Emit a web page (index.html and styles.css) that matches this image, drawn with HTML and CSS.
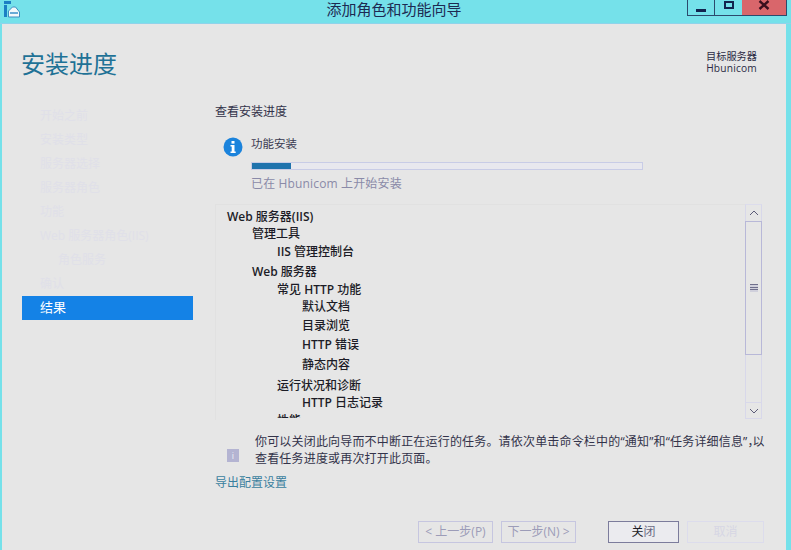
FILE: index.html
```html
<!DOCTYPE html>
<html lang="zh-CN">
<head>
<meta charset="utf-8">
<title>添加角色和功能向导</title>
<link rel="stylesheet" href="styles.css">
</head>
<body>
<div class="window">
  <header class="titlebar">
    <svg class="app-icon" width="16" height="17" viewBox="0 0 16 17">
      <rect x="0" y="0" width="7" height="3" fill="#1c7fc4"/>
      <rect x="0" y="4" width="3" height="12" fill="#1c7fc4"/>
      <path d="M4.500 10l4-4h3l4 5v5h-11z" fill="#f3f8fb" stroke="#3f8fc0"/>
      <rect x="6" y="11" width="8" height="2" fill="#6aaad6"/>
    </svg>
    <div class="title">添加角色和功能向导</div>
    <div class="controls">
      <div class="ctl ctl-min"><span class="min-glyph"></span></div>
      <div class="ctl ctl-max"><span class="max-glyph"></span></div>
      <div class="ctl ctl-close">
        <svg width="12" height="10" viewBox="0 0 12 10"><path d="M1.500 1l9 8M10.500 1l-9 8" stroke="#3a0f1e" stroke-width="2.400" fill="none"/></svg>
      </div>
    </div>
  </header>
  <div class="client">
    <div class="head">
      <h1 class="heading">安装进度</h1>
      <div class="target"><div>目标服务器</div><div class="target-name">Hbunicom</div></div>
    </div>
    <div class="columns">
      <nav class="nav">
        <div class="nav-item">开始之前</div>
        <div class="nav-item">安装类型</div>
        <div class="nav-item">服务器选择</div>
        <div class="nav-item">服务器角色</div>
        <div class="nav-item">功能</div>
        <div class="nav-item">Web 服务器角色(IIS)</div>
        <div class="nav-item nav-sub">角色服务</div>
        <div class="nav-item">确认</div>
        <div class="nav-item nav-active">结果</div>
      </nav>
      <main class="main">
        <div class="lead">查看安装进度</div>
        <div class="status">
          <svg class="info" width="20" height="20" viewBox="0 0 20 20">
            <circle cx="10" cy="10" r="9.500" fill="#1b83dc"/>
            <rect x="8.500" y="4" width="3" height="2.600" fill="#fff"/>
            <path d="M7.500 8h4v6.500h1.200V16H7.500v-1.500h1.200V9.500H7.500z" fill="#fff"/>
          </svg>
          <div class="status-body">
            <div class="status-title">功能安装</div>
            <div class="progress"><div class="progress-fill"></div></div>
            <div class="status-note">已在 Hbunicom 上开始安装</div>
          </div>
        </div>
        <div class="listbox">
          <div class="tree">
            <div class="row l0 r-a"><b class="lat">Web</b> 服务器<b class="lat">(IIS)</b></div>
            <div class="row l1 r-b">管理工具</div>
            <div class="row l2 r-c"><b class="lat">IIS</b> 管理控制台</div>
            <div class="row l1 r-d"><b class="lat">Web</b> 服务器</div>
            <div class="row l2 r-e">常见 <b class="lat">HTTP</b> 功能</div>
            <div class="row l3 r-f">默认文档</div>
            <div class="row l3 r-g">目录浏览</div>
            <div class="row l3 r-h"><b class="lat">HTTP</b> 错误</div>
            <div class="row l3 r-i">静态内容</div>
            <div class="row l2 r-j">运行状况和诊断</div>
            <div class="row l3 r-k"><b class="lat">HTTP</b> 日志记录</div>
            <div class="row l2 r-l">性能</div>
          </div>
          <div class="scrollbar">
            <div class="sb-btn">
              <svg width="10" height="6" viewBox="0 0 10 6"><path d="M1 5l4-4 4 4" fill="none" stroke="#5c5c78"/></svg>
            </div>
            <div class="sb-thumb"><span class="grip"></span></div>
            <div class="sb-track"></div>
            <div class="sb-btn sb-btn-down">
              <svg width="10" height="6" viewBox="0 0 10 6"><path d="M1 1l4 4 4-4" fill="none" stroke="#5c5c78"/></svg>
            </div>
          </div>
        </div>
        <div class="notice">
          <div class="notice-icon">i</div>
          <p class="notice-text">你可以关闭此向导而不中断正在运行的任务。请依次单击命令栏中的“通知”和“任务详细信息”<span class="tight">，</span>以<br>查看任务进度或再次打开此页面。</p>
        </div>
        <a class="export">导出配置设置</a>
      </main>
    </div>
    <footer class="footer">
      <div class="btn btn-faded">&lt; 上一步(P)</div>
      <div class="btn btn-faded btn-next">下一步(N) &gt;</div>
      <div class="btn btn-close"><span>关</span><span class="blot">闭</span></div>
      <div class="btn btn-cancel">取消</div>
    </footer>
  </div>
</div>
</body>
</html>
```

FILE: styles.css
```css
* { box-sizing: border-box; }
html, body { margin: 0; padding: 0; }
body {
  width: 791px;
  height: 550px;
  overflow: hidden;
  font-family: "Open Sans", "Noto Sans CJK SC", sans-serif;
  font-size: 12px;
  color: #2b2b3a;
}
.window {
  width: 791px;
  height: 550px;
  background: #75e1ea;
  display: flex;
  flex-direction: column;
}
.titlebar {
  height: 24px;
  flex: none;
  display: flex;
  position: relative;
  justify-content: center;
  border-bottom: 1px solid #8fd3ea;
}
.app-icon { position: absolute; left: 4px; top: 1px; }
.title {
  font-size: 15px;
  line-height: 18px;
  color: #1d2a52;
  margin-right: 3px;
}
.controls {
  position: absolute;
  left: 687px;
  top: 0;
  display: flex;
  height: 16px;
  border: 1px solid #2b4a6d;
  border-top: 0;
}
.ctl { display: flex; align-items: center; justify-content: center; }
.ctl-min { width: 27px; border-right: 1px solid #2b4a6d; }
.ctl-max { width: 27px; }
.ctl-close { width: 44px; background: #d9666b; }
.min-glyph { width: 10px; height: 3px; background: #12244f; margin-top: 5px; }
.max-glyph { width: 10px; height: 8px; border: 2px solid #12244f; margin-top: -5px; }
.ctl-close svg { margin-top: -5px; }

.client {
  flex: 1;
  margin: 0 5px 0 2px;
  background: #e6e6e6;
  display: flex;
  flex-direction: column;
}
.head {
  height: 72px;
  flex: none;
  display: flex;
  justify-content: space-between;
  padding: 22px 29px 0 20px;
}
.heading {
  margin: 0 0 0 -1px;
  font-size: 24px;
  line-height: 36px;
  font-weight: 400;
  color: #1f7296;
}
.target {
  font-size: 10.200px;
  line-height: 12px;
  color: #2b2b44;
  text-align: right;
  padding-top: 4px;
}
.target-name { letter-spacing: 0.200px; }
.columns { display: flex; height: 425px; flex: none; }
.nav {
  width: 171px;
  margin-left: 20px;
  padding-top: 8px;
  flex: none;
}
.nav-item {
  height: 24px;
  line-height: 23px;
  padding-left: 18px;
  color: #e0e0e9;
  font-size: 12px;
  white-space: nowrap;
}
.nav-sub { padding-left: 36px; }
.nav-active {
  background: #1482e6;
  color: #fff;
  font-size: 13px;
}
.main { margin-left: 22px; width: 551px; flex: none; }
.lead { line-height: 18px; font-size: 12px; margin-top: 7px; color: #33334a; }
.status { display: flex; margin-top: 15px; padding-left: 8px; }
.info { flex: none; margin-top: 1px; }
.status-body { margin-left: 8px; width: 392px; }
.status-title { line-height: 18px; color: #3a3a50; font-size: 11.500px; margin-top: -1px; }
.progress {
  height: 8px;
  margin-top: 9px;
  border: 1px solid #c8cce6;
  background: #e8e8ee;
}
.progress-fill { width: 39px; height: 6px; background: #1f73ad; }
.status-note {
  margin-top: 5px;
  line-height: 18px;
  color: #8a8aa8;
  font-size: 12px;
  letter-spacing: 0.150px;
}
.listbox {
  display: flex;
  justify-content: space-between;
  margin-top: 11px;
  height: 216px;
  border-top: 1px solid #e1e1e1;
  border-left: 1px solid #e1e1e1;
  width: 547px;
}
.tree {
  height: 213px;
  overflow: hidden;
  font-weight: 500;
  color: #1c1c26;
  font-size: 12px;
}
.lat { font-weight: 600; }
.row { height: 18px; line-height: 18px; white-space: nowrap; }
.l0 { padding-left: 11px; }
.l1 { padding-left: 36px; }
.l2 { padding-left: 61px; }
.l3 { padding-left: 86px; }
.r-a { margin-top: 3px; }
.r-b { margin-top: -1px; }
.r-d { margin-top: 2px; }
.r-f { margin-top: -1px; }
.r-g { margin-top: 1px; }
.r-h { margin-top: 1px; }
.r-i { margin-top: 2px; }
.r-j { margin-top: 3px; }
.r-k { margin-top: -1px; }
.scrollbar {
  width: 17px;
  height: 215px;
  margin-top: -1px;
  display: flex;
  flex-direction: column;
  border: 1px solid #d8d8ea;
  border-top-color: #dcdcec;
}
.sb-btn {
  height: 16px;
  flex: none;
  display: flex;
  align-items: center;
  justify-content: center;
}
.sb-thumb {
  height: 134px;
  flex: none;
  margin: 0 -1px;
  border: 1px solid #b8b8d8;
  display: flex;
  align-items: center;
  justify-content: center;
}
.grip {
  width: 8px;
  height: 8px;
  background: repeating-linear-gradient(#70708c 0 1px, #d0d0dc 1px 2.600px);
}
.sb-track { flex: 1; }
.sb-btn-down { border-top: 1px solid #d8d8ea; }
.notice { display: flex; position: relative; padding: 13px 0 0 40px; }
.notice-icon {
  position: absolute;
  left: 12px;
  top: 29px;
  width: 12px;
  height: 13px;
  background: #b4b4d2;
  color: #eeeef4;
  font-size: 9px;
  line-height: 13px;
  text-align: center;
}
.notice-text {
  margin: 0;
  font-size: 12px;
  line-height: 17px;
  color: #33334a;
  letter-spacing: 0.180px;
  white-space: nowrap;
}
.tight { letter-spacing: -7px; }
.export {
  display: block;
  margin-top: 8px;
  line-height: 16px;
  color: #3a7f9e;
  font-size: 12px;
}
.footer {
  height: 29px;
  flex: none;
  display: flex;
  align-items: flex-start;
  padding-left: 416px;
}
.btn {
  height: 22px;
  line-height: 20px;
  text-align: center;
  font-size: 12px;
}
.btn-faded {
  width: 75px;
  border: 1px solid #c6c6e0;
  color: #9c9cb8;
}
.btn-next { margin-left: 8px; }
.btn-close {
  width: 71px;
  margin-left: 32px;
  border: 1px solid #7c7c9c;
  color: #1c1c26;
  background: #ebebef;
}
.blot { color: #6a6a84; }
.btn-cancel {
  width: 77px;
  margin-left: 8px;
  border: 1px solid #dcdcec;
  color: #d6d6e4;
}
```
